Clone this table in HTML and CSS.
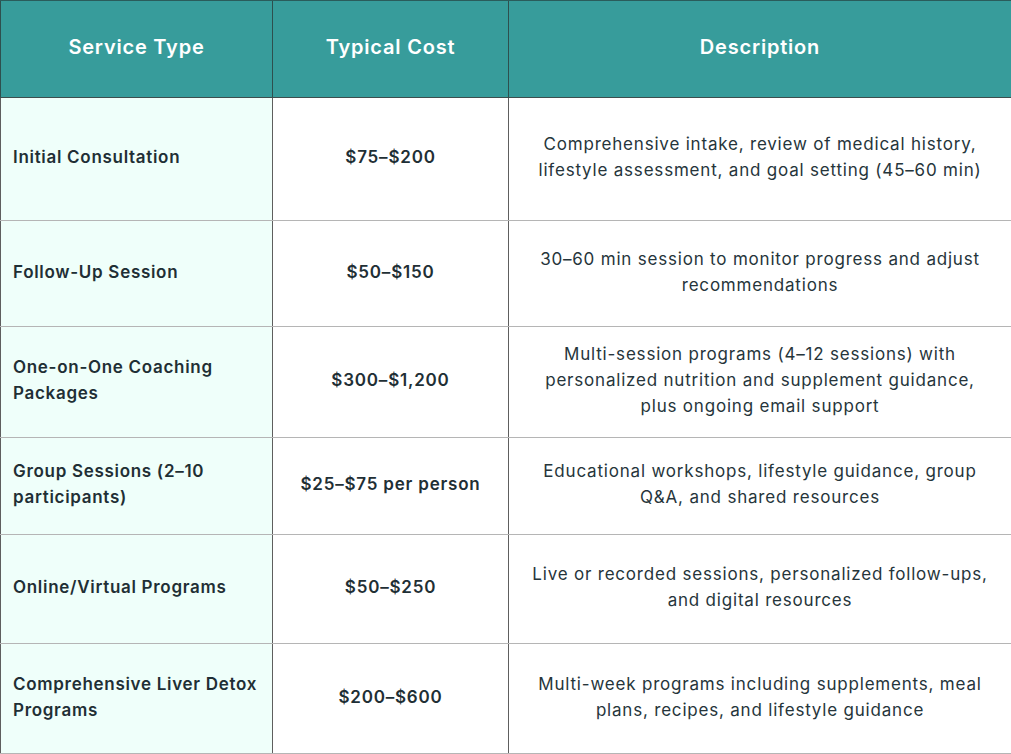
FILE: index.html
```html
<!DOCTYPE html>
<html lang="en">
<head>
<meta charset="utf-8">
<title>Service Costs</title>
<link rel="stylesheet" href="styles.css">
</head>
<body>
<table class="costs">
  <colgroup>
    <col class="c-type">
    <col class="c-cost">
    <col class="c-desc">
  </colgroup>
  <thead>
    <tr class="head-row">
      <th>Service Type</th>
      <th>Typical Cost</th>
      <th>Description</th>
    </tr>
  </thead>
  <tbody>
    <tr class="r1">
      <td class="name">Initial Consultation</td>
      <td class="cost">$75–$200</td>
      <td class="desc">Comprehensive intake, review of medical history, lifestyle assessment, and goal setting (45–60 min)</td>
    </tr>
    <tr class="r2">
      <td class="name">Follow-Up Session</td>
      <td class="cost">$50–$150</td>
      <td class="desc">30–60 min session to monitor progress and adjust recommendations</td>
    </tr>
    <tr class="r3">
      <td class="name">One-on-One Coaching Packages</td>
      <td class="cost">$300–$1,200</td>
      <td class="desc">Multi-session programs (4–12 sessions) with personalized nutrition and supplement guidance, plus ongoing email support</td>
    </tr>
    <tr class="r4">
      <td class="name">Group Sessions (2–10 participants)</td>
      <td class="cost">$25–$75 per person</td>
      <td class="desc">Educational workshops, lifestyle guidance, group Q&amp;A, and shared resources</td>
    </tr>
    <tr class="r5">
      <td class="name">Online/Virtual Programs</td>
      <td class="cost">$50–$250</td>
      <td class="desc">Live or recorded sessions, personalized <span class="nowrap">follow-ups,</span> and digital resources</td>
    </tr>
    <tr class="r6">
      <td class="name">Comprehensive Liver Detox Programs</td>
      <td class="cost">$200–$600</td>
      <td class="desc">Multi-week programs including supplements, meal plans, recipes, and lifestyle guidance</td>
    </tr>
  </tbody>
</table>
</body>
</html>
```

FILE: styles.css
```css
html, body {
  margin: 0;
  padding: 0;
  background: #ffffff;
}

body {
  font-family: Inter, "Noto Sans", "Liberation Sans", sans-serif;
  color: #1f2f35;
}

.costs {
  width: 1011px;
  border-collapse: collapse;
  table-layout: fixed;
}

.c-type { width: 272px; }
.c-cost { width: 236px; }
.c-desc { width: 503px; }

.head-row {
  height: 97px;
}

.head-row th {
  background: #379c9b;
  color: #ffffff;
  font-size: 20px;
  letter-spacing: 0.8px;
  font-weight: 600;
  text-align: center;
  border-top: 1px solid #2a5c5b;
  border-bottom: 1px solid #3d4e4e;
  border-left: 1px solid #2e4f4e;
  padding: 0 0 4px;
}

.head-row th:last-child {
  border-right: 1px solid #7a9594;
}

td {
  border-top: 1px solid #b5b5b5;
  border-bottom: 1px solid #b5b5b5;
  border-left: 1px solid #5e5e5e;
  vertical-align: middle;
  font-size: 17px;
  letter-spacing: 0.8px;
  line-height: 26px;
  padding: 0 0 4px;
}

td.desc {
  border-right: 1px solid #c8c8c8;
  text-align: center;
  padding: 0 18px 4px;
  font-weight: 400;
  color: #26353b;
}

.nowrap {
  white-space: nowrap;
}

td.name {
  background: #effffa;
  font-weight: 600;
  letter-spacing: 0.7px;
  text-align: left;
  padding: 0 4px 4px 12px;
}

td.cost {
  font-weight: 600;
  text-align: center;
  padding: 0 8px 4px;
}

.r1 { height: 123px; }
.r2 { height: 106px; }
.r3 { height: 111px; }
.r4 { height: 97px; }
.r5 { height: 109px; }
.r6 { height: 110px; }
```
